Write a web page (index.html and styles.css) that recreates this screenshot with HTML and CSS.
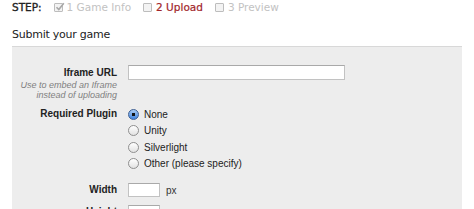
FILE: index.html
```html
<!DOCTYPE html>
<html lang="en">
<head>
    <meta charset="UTF-8">
    <title>Submit your game</title>
    <link rel="stylesheet" href="styles.css">
</head>
<body>
<div id="page">
    <ul class="steps">
        <li class="step-title">STEP:</li>
        <li class="done">
            <span class="box"><svg width="10" height="10" viewBox="0 0 10 10"><path d="M1.5 5.2 L3.8 7.6 L8.8 1.2" fill="none" stroke="#a8a8a8" stroke-width="1.6"/></svg></span>1 Game Info
        </li>
        <li class="current"><span class="box"></span>2 Upload</li>
        <li class="todo"><span class="box"></span>3 Preview</li>
    </ul>

    <h2 class="heading">Submit your game</h2>

    <div class="panel">
        <div class="form">
            <div class="label">
                <p class="name">Iframe URL</p>
                <p class="hint">Use to embed an Iframe<br>instead of uploading</p>
            </div>
            <div class="field">
                <input type="text" class="url">
            </div>

            <div class="label">
                <p class="name plugin">Required Plugin</p>
            </div>
            <div class="field radios">
                <label><input type="radio" name="plugin" checked>None</label>
                <label><input type="radio" name="plugin">Unity</label>
                <label><input type="radio" name="plugin">Silverlight</label>
                <label><input type="radio" name="plugin">Other (please specify)</label>
            </div>

            <div class="label">
                <p class="name size">Width</p>
            </div>
            <div class="field">
                <input type="text" class="num"><span class="unit">px</span>
            </div>

            <div class="label last">
                <p class="name size">Height</p>
            </div>
            <div class="field last">
                <input type="text" class="num"><span class="unit">px</span>
            </div>
        </div>
    </div>
</div>
</body>
</html>
```

FILE: styles.css
```css
html,body,ul,p,h2,div{
    margin: 0;
    padding: 0;
}
body{
    font-family: "Liberation Sans", Arial, sans-serif;
    font-size: 10px;
    color: #222;
    background: #fff;
}
#page{
    padding: 0 12px;
}
li{
    list-style: none;
}
.steps{
    display: flex;
    align-items: center;
    height: 14px;
    font-family: "DejaVu Sans", Verdana, sans-serif;
    font-size: 10.5px;
}
.steps li{
    display: flex;
    align-items: center;
    margin-right: 12px;
}
.steps .step-title{
    color: #222;
    -webkit-text-stroke: 0.35px #222;
}
.steps .done,
.steps .todo{
    color: #c2c2c2;
}
.steps .current{
    color: #a2262b;
    -webkit-text-stroke: 0.2px #a2262b;
}
.box{
    width: 7px;
    height: 7px;
    border: 1px solid #bdbdbd;
    border-radius: 1px;
    background: #f3f3f3;
    margin-right: 4px;
    position: relative;
}
.box svg{
    position: absolute;
    left: 0;
    top: -2px;
}
.heading{
    margin-top: 14px;
    font-family: "DejaVu Sans", Verdana, sans-serif;
    font-size: 11px;
    letter-spacing: -0.25px;
    line-height: 14px;
    font-weight: normal;
    color: #222;
}
.panel{
    margin-top: 4px;
    width: 450px;
    height: 200px;
    border-top: 1px solid #d8d8d8;
    background: #ededed;
    padding-top: 18px;
    box-sizing: border-box;
}
.form{
    display: grid;
    grid-template-columns: 105px 1fr;
    column-gap: 11px;
    row-gap: 6px;
}
.label{
    text-align: right;
}
.name{
    font-weight: bold;
    line-height: 15px;
    color: #222;
}
.plugin{
    line-height: 16px;
}
.size{
    line-height: 14px;
}
.last{
    margin-top: 2px;
}
.hint{
    font-style: italic;
    font-size: 9px;
    line-height: 10px;
    color: #808080;
}
input[type=text]{
    display: block;
    box-sizing: border-box;
    margin: 0;
    border: 1px solid #c2c2c2;
    border-top-color: #a9a9a9;
    background: #fff;
}
.url{
    width: 217px;
    height: 15px;
}
.field{
    display: flex;
    align-items: center;
    align-self: start;
}
.num{
    width: 32px;
    height: 14px;
}
.unit{
    margin-left: 6px;
    color: #333;
}
.radios{
    flex-direction: column;
    align-items: flex-start;
    padding-bottom: 5px;
}
.radios label{
    display: flex;
    align-items: center;
    height: 16.5px;
    color: #222;
}
.radios input{
    -webkit-appearance: none;
    appearance: none;
    width: 11px;
    height: 11px;
    margin: 0 5px 0 0;
    border: 1px solid #8f8f8f;
    border-radius: 50%;
    background: linear-gradient(#ffffff, #e2e2e2);
    box-sizing: border-box;
    position: relative;
}
.radios input:checked{
    border-color: #3d5f93;
    background: radial-gradient(circle, #111 0, #111 1.5px, transparent 2px), linear-gradient(#a9cbf2, #3e82de);
}
```
